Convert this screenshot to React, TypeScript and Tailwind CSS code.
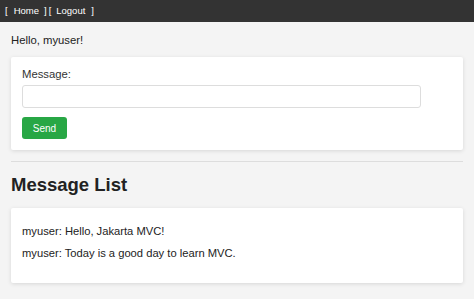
export default function App() {
  const messages = [
    { user: 'myuser', text: 'Hello, Jakarta MVC!' },
    { user: 'myuser', text: 'Today is a good day to learn MVC.' },
  ];

  return (
    <div className="min-h-[299px] bg-[#f4f4f4] font-['Liberation_Sans',Arial,sans-serif] text-[#222]">
      <nav className="h-[22px] bg-[#333] px-[5px] flex items-center text-[9.5px] text-white">
        <span>[</span>
        <span className="ml-[6px]">Home</span>
        <span className="ml-[5px]">]</span>
        <span className="ml-[2px]">[</span>
        <span className="ml-[5px]">Logout</span>
        <span className="ml-[6px]">]</span>
      </nav>

      <main className="px-[11px]">
        <p className="pt-[12px] text-[11.3px] leading-[13px]">Hello, myuser!</p>

        <form className="mt-[10px] bg-white rounded-[2px] shadow-[0_1px_4px_rgba(0,0,0,0.12)] px-[11px] pt-[11px] pb-[11px]">
          <label className="block text-[11.3px] leading-[13px] text-[#333]">Message:</label>
          <input
            type="text"
            className="mt-[4px] block w-[399px] h-[23px] border border-[#ddd] rounded-[3px] bg-white outline-none"
          />
          <button
            type="button"
            className="mt-[9px] block w-[45px] h-[22px] bg-[#28a745] text-white text-[10px] rounded-[3px]"
          >
            Send
          </button>
        </form>

        <hr className="mt-[11px] border-0 border-t border-[#ddd]" />

        <h2 className="mt-[13px] text-[18.5px] leading-[20px] font-bold text-[#222]">Message List</h2>

        <section className="mt-[13px] bg-white rounded-[2px] shadow-[0_1px_4px_rgba(0,0,0,0.12)] px-[11px] pt-[16px] pb-[23px]">
          {messages.map((m, i) => (
            <p key={i} className={`text-[11.2px] leading-[14px] text-[#222] ${i > 0 ? 'mt-[8px]' : ''}`}>
              {m.user}: {m.text}
            </p>
          ))}
        </section>
      </main>
    </div>
  );
}
